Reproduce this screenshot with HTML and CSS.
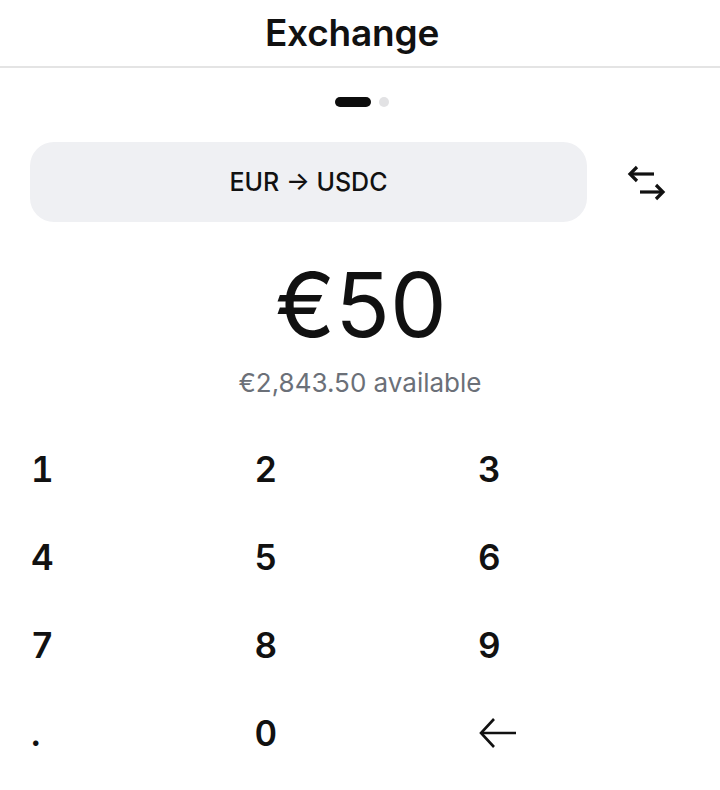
FILE: index.html
```html
<!DOCTYPE html>
<html>
<head>
<meta charset="utf-8">
<link rel="stylesheet" href="styles.css">
</head>
<body>
<div class="screen">
  <header class="topbar">
    <h1 class="title">Exchange</h1>
  </header>
  <div class="pager">
    <span class="dot dot-active"></span>
    <span class="dot"></span>
  </div>
  <div class="pair-row">
    <div class="pair-pill">EUR → USDC</div>
    <div class="swap">
      <svg width="40" height="36" viewBox="0 0 40 36" fill="none" stroke="#111" stroke-width="3.2" stroke-linecap="butt" stroke-linejoin="miter">
        <path d="M28 9H4"/>
        <path d="M11 2L4 9l7 7"/>
        <path d="M14 27h23"/>
        <path d="M30 20l7 7-7 7"/>
      </svg>
    </div>
  </div>
  <div class="amount">€50</div>
  <div class="available">€2,843.50 available</div>
  <div class="keypad">
    <div class="key">1</div>
    <div class="key">2</div>
    <div class="key">3</div>
    <div class="key">4</div>
    <div class="key">5</div>
    <div class="key">6</div>
    <div class="key">7</div>
    <div class="key">8</div>
    <div class="key">9</div>
    <div class="key">.</div>
    <div class="key">0</div>
    <div class="key key-icon">
      <svg width="40" height="32" viewBox="0 0 40 32" fill="none" stroke="#111" stroke-width="2.6">
        <path d="M38 16H3"/>
        <path d="M16 2L3 16l13 14"/>
      </svg>
    </div>
  </div>
</div>
</body>
</html>
```
FILE: styles.css
```css
* { box-sizing: border-box; }
html, body { margin: 0; padding: 0; background: #fff; }
body {
  font-family: Inter, "Noto Sans", "Liberation Sans", sans-serif;
  color: #111;
}
.screen { width: 720px; height: 790px; overflow: hidden; }
.topbar {
  height: 68px;
  border-bottom: 2px solid #e4e4e4;
  display: flex;
  align-items: center;
  justify-content: center;
  padding-right: 16px;
}
.title {
  margin: 0;
  font-size: 37px;
  font-weight: 600;
  letter-spacing: -0.2px;
  line-height: 1;
  padding-bottom: 2px;
}
.pager {
  display: flex;
  justify-content: center;
  align-items: center;
  gap: 8px;
  height: 68px;
  padding-left: 3px;
}
.dot {
  width: 10px;
  height: 10px;
  border-radius: 5px;
  background: #e2e2e4;
}
.dot-active {
  width: 36px;
  background: #0d0d0d;
}
.pair-row {
  display: flex;
  align-items: center;
  padding: 6px 0 0 30px;
}
.pair-pill {
  width: 557px;
  height: 80px;
  border-radius: 24px;
  background: #eff0f3;
  display: flex;
  align-items: center;
  justify-content: center;
  font-size: 25px;
  font-weight: 500;
  color: #111;
}
.swap {
  width: 60px;
  margin-left: 29px;
  display: flex;
  justify-content: center;
  padding-top: 2px;
}
.amount {
  margin-top: 38px;
  text-align: center;
  font-size: 90px;
  font-weight: 400;
  line-height: 90px;
  padding-left: 2px;
}
.available {
  text-align: center;
  font-size: 26px;
  line-height: 30px;
  color: #6b7078;
  margin-top: 18px;
}
.keypad {
  margin-top: 27px;
  display: grid;
  grid-template-columns: repeat(3, 223.5px);
  grid-auto-rows: 88px;
  padding-left: 31px;
}
.key {
  display: flex;
  align-items: center;
  font-size: 35px;
  font-weight: 600;
  line-height: 1;
  font-variant-numeric: tabular-nums;
}
.key-icon { padding-left: 0; }
```
